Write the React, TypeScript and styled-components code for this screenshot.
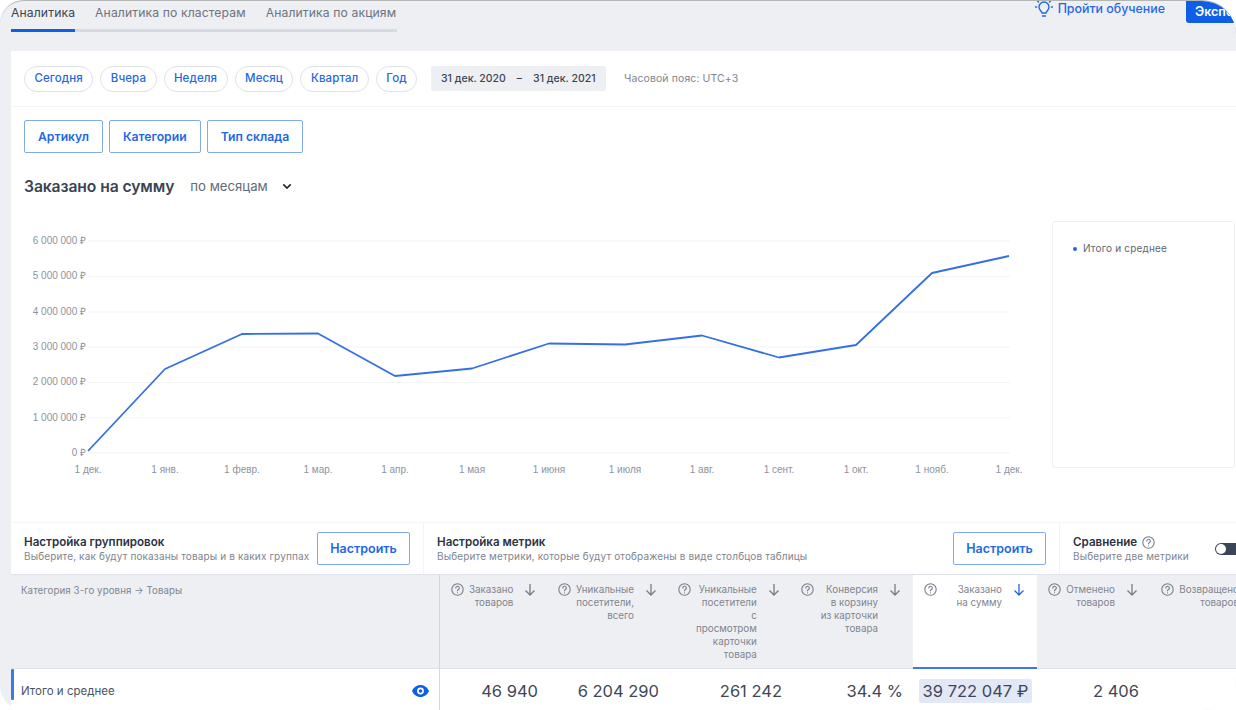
import React from "react";
import styled, { createGlobalStyle } from "styled-components";

const Global = createGlobalStyle`
  html, body { margin: 0; padding: 0; background: #fff; }
  body { font-family: Inter, "Noto Sans", "Liberation Sans", sans-serif; }
  * { box-sizing: border-box; }
`;

const Window = styled.div`
  width: 1236px;
  height: 710px;
  background: #eeeff3;
  border-top: 1px solid #b4b5b5;
  border-radius: 24px 34px 34px 24px;
  overflow: hidden;
  padding-left: 11px;
`;
const TopBar = styled.header`
  display: flex;
  justify-content: space-between;
  align-items: flex-start;
  height: 50px;
`;
const Tabs = styled.nav`
  display: flex;
  width: 386px;
  height: 31px;
  border-bottom: 3px solid #d6dbe3;
`;
const Tab = styled.div<{ $active?: boolean }>`
  height: 31px;
  padding-top: 3px;
  margin-right: 20px;
  font-size: 12.2px;
  line-height: 17px;
  color: ${(p) => (p.$active ? "#3b4455" : "#6d7480")};
  border-bottom: 3px solid ${(p) => (p.$active ? "#0f5fe0" : "transparent")};
  letter-spacing: 0.1px;
  white-space: nowrap;
  &:last-child { margin-right: 0; }
`;
const TopActions = styled.div`
  display: flex;
  align-items: flex-start;
`;
const Learn = styled.div`
  display: flex;
  align-items: center;
  gap: 5px;
  height: 15px;
  margin-right: 21px;
  color: #2467e4;
  font-size: 12.4px;
  font-weight: 500;
  white-space: nowrap;
`;
const ExportButton = styled.div`
  width: 50px;
  height: 22px;
  padding: 3px 0 0 9px;
  background: #0f5fe6;
  color: #fff;
  font-size: 12.5px;
  font-weight: 600;
  border-bottom-left-radius: 3px;
  overflow: hidden;
`;
const Card = styled.main`
  background: #fff;
  height: 660px;
  overflow: hidden;
`;
const DateRow = styled.section`
  display: flex;
  align-items: center;
  height: 56px;
  padding: 0 13px;
  border-bottom: 1px solid #f3f4f6;
`;
const Pills = styled.div`
  display: flex;
  gap: 7px;
  width: 394px;
  margin-right: 13px;
`;
const Pill = styled.button`
  height: 26px;
  padding: 0 9.45px 2px;
  border: 1px solid #dfe2e8;
  border-radius: 13px;
  background: #fff;
  color: #2467e4;
  font: 500 11.5px Inter, sans-serif;
  letter-spacing: 0.1px;
`;
const DateBox = styled.div`
  display: flex;
  align-items: center;
  gap: 11px;
  width: 175px;
  height: 25px;
  padding: 0 10px;
  background: #eeeff3;
  border-radius: 2px;
  color: #3b4455;
  font-size: 10.5px;
  font-weight: 500;
  white-space: nowrap;
`;
const TimeZone = styled.span`
  margin-left: 18px;
  color: #80858f;
  font-size: 10.5px;
  letter-spacing: 0.1px;
`;
const FilterRow = styled.section`
  display: flex;
  gap: 6px;
  padding: 13px 13px 0;
`;
const FilterButton = styled.button`
  height: 33px;
  padding: 0 13px;
  background: #fff;
  border: 1px solid #80a9ef;
  border-radius: 2px;
  color: #2467e4;
  font: 600 12.2px Inter, sans-serif;
`;
const ChartHead = styled.section`
  display: flex;
  align-items: center;
  height: 22px;
  margin-top: 22px;
  padding-left: 13px;
`;
const ChartTitle = styled.h2`
  margin: 0 16px 0 0;
  color: #3b4455;
  font-size: 15.7px;
  font-weight: 600;
  letter-spacing: -0.1px;
`;
const Period = styled.div`
  display: flex;
  align-items: center;
  gap: 14px;
  color: #636a76;
  font-size: 13.2px;
`;
const ChartArea = styled.section`
  display: flex;
  height: 301px;
  margin-top: 24px;
`;
const ChartSvg = styled.svg`
  display: block;
  flex: none;
  width: 1041px;
  height: 301px;
  text {
    font-family: "Liberation Sans", Arial, sans-serif;
    font-size: 10px;
    fill: #8d939e;
  }
`;
const Legend = styled.aside`
  display: flex;
  align-items: flex-start;
  gap: 6px;
  width: 183px;
  height: 247px;
  padding: 20px 20px 0;
  border: 1px solid #eff0f3;
  border-radius: 3px;
  color: #5f6672;
  font-size: 10px;
  line-height: 13px;
  letter-spacing: 0.18px;
`;
const Dot = styled.span`
  width: 4px;
  height: 4px;
  margin-top: 5px;
  border-radius: 50%;
  background: #2467e4;
`;
const Settings = styled.section`
  display: grid;
  grid-template-columns: 413px 636px 1fr;
  height: 53px;
  border-top: 1px solid #f6f6f8;
  border-bottom: 1px solid #dfe2e8;
`;
const SettingsCell = styled.div`
  display: flex;
  justify-content: space-between;
  align-items: center;
  padding: 0 13px;
  border-right: 1px solid #f3f4f6;
  &:last-child { border-right: 0; padding-right: 0; }
`;
const SettingsTitle = styled.div`
  display: flex;
  align-items: center;
  gap: 5px;
  color: #2b3342;
  font-size: 11.6px;
  font-weight: 600;
  line-height: 15px;
`;
const SettingsDesc = styled.div`
  color: #80858f;
  font-size: 10px;
  line-height: 13px;
  letter-spacing: 0.14px;
  white-space: nowrap;
`;
const Configure = styled.button`
  flex: none;
  width: 93px;
  height: 33px;
  background: #fff;
  border: 1px solid #80a9ef;
  border-radius: 2px;
  color: #2467e4;
  font: 600 12.5px Inter, sans-serif;
`;
const Toggle = styled.div`
  position: relative;
  flex: none;
  width: 30px;
  height: 12px;
  margin-right: -9px;
  border-radius: 6px;
  background: #3b4558;
  &::before {
    content: "";
    position: absolute;
    left: 1px;
    top: 1px;
    width: 10px;
    height: 10px;
    border-radius: 50%;
    background: #fff;
  }
`;
const TableGrid = styled.section`
  display: grid;
  grid-template-columns: 429px 107px 120px 123px 123px 124px 113px 124px;
  grid-template-rows: 94px 42px;
`;
const CornerHead = styled.div`
  padding: 9px 10px;
  background: #eeeff3;
  border-right: 1px solid #d3d6dd;
  border-bottom: 1px solid #dfe2e8;
  color: #80858f;
  font-size: 9.7px;
  line-height: 13px;
  letter-spacing: 0.1px;
`;
const MetricHead = styled.div<{ $active?: boolean }>`
  display: flex;
  align-items: flex-start;
  justify-content: space-between;
  padding: 8px 12px 0 11px;
  background: ${(p) => (p.$active ? "#fff" : "#eeeff3")};
  border-bottom: ${(p) => (p.$active ? "2px solid #3d79e4" : "1px solid #dfe2e8")};
  color: #80858f;
  font-size: 9.8px;
  line-height: 13px;
`;
const MetricLabel = styled.div`
  flex: 1;
  margin: 0 11px 0 5px;
  text-align: right;
  white-space: nowrap;
`;
const RowLabel = styled.div`
  position: relative;
  display: flex;
  align-items: center;
  justify-content: space-between;
  padding: 2px 10px 0 10px;
  background: #fff;
  border-right: 1px solid #d3d6dd;
  color: #4b5361;
  font-size: 11.5px;
  &::before {
    content: "";
    position: absolute;
    left: 0;
    top: 0;
    width: 3px;
    height: 31px;
    background: #3d79e4;
    border-radius: 1px;
  }
`;
const Value = styled.div<{ $pad?: number }>`
  display: flex;
  align-items: center;
  justify-content: flex-end;
  padding: 2px ${(p) => p.$pad ?? 9}px 0 0;
  color: #3e4757;
  font-size: 16.5px;
  white-space: nowrap;
`;
const Highlight = styled.span`
  display: block;
  width: 113px;
  margin-left: 6px;
  padding: 2px 0;
  line-height: 20px;
  background: #e2e8f5;
  border-radius: 2px;
  text-align: center;
`;
const ActiveValue = styled.div`
  display: flex;
  align-items: center;
  padding-top: 2px;
  color: #3e4757;
  font-size: 16.5px;
  white-space: nowrap;
`;

const Help = ({ size = 13 }: { size?: number }) => (
  <svg width={size} height={size} viewBox="0 0 24 24" fill="none" stroke="#777d88" strokeWidth="2" strokeLinecap="round" style={{ flex: "none" }}>
    <circle cx="12" cy="12" r="10.5" />
    <path d="M8.8 9.2a3.3 3.3 0 1 1 4.9 2.9c-1.1.6-1.7 1.2-1.7 2.4" />
    <path d="M12 18v.2" />
  </svg>
);
const Arrow = ({ active }: { active?: boolean }) => (
  <svg width="12" height="13" viewBox="0 0 12 13" fill="none" stroke={active ? "#2467e4" : "#777d88"} strokeWidth="1.3" style={{ flex: "none" }}>
    <path d="M6 1v11M1.500 7.500 6 12l4.500-4.500" />
  </svg>
);
const Bulb = () => (
  <svg width="18" height="18" viewBox="0 0 18 18" fill="none" stroke="#2467e4" strokeWidth="1.4" strokeLinecap="round" style={{ flex: "none", marginTop: 1 }}>
    <path d="M7 13c-.2-1.800-3-2.700-3-6a5 5 0 0 1 10 0c0 3.300-2.800 4.200-3 6z" />
    <path d="M7.500 16h3M.6 7h1M16.400 7h1M2.700 1.200l.8.8M15.300 1.200l-.8.8" />
  </svg>
);
const Chevron = () => (
  <svg width="10" height="7" viewBox="0 0 10 7" fill="none" stroke="#222a38" strokeWidth="1.7">
    <path d="M1.300 1.300 5 5l3.700-3.700" />
  </svg>
);
const Eye = () => (
  <svg width="17" height="12" viewBox="0 0 17 12">
    <path fill="#0f5fe6" fillRule="evenodd" d="M8.500 0C12.300 0 15.500 2.500 17 6c-1.500 3.500-4.700 6-8.500 6S1.500 9.500 0 6C1.500 2.500 4.700 0 8.500 0zm0 2.600a3.400 3.400 0 1 0 0 6.800 3.400 3.400 0 0 0 0-6.800zm0 1.600a1.800 1.800 0 1 1 0 3.600 1.800 1.800 0 0 1 0-3.600z" />
  </svg>
);

const ticks = [
  [241, "6 000 000 ₽"], [276.5, "5 000 000 ₽"], [312, "4 000 000 ₽"], [347, "3 000 000 ₽"],
  [382.5, "2 000 000 ₽"], [418, "1 000 000 ₽"], [453, "0 ₽"],
] as const;
const months = ["1 дек.", "1 янв.", "1 февр.", "1 мар.", "1 апр.", "1 мая", "1 июня", "1 июля", "1 авг.", "1 сент.", "1 окт.", "1 нояб.", "1 дек."];
const monthX = [88, 165, 242, 318, 395, 472, 549, 625, 702, 779, 856, 932, 1009];
const line = [451, 369, 334, 333.5, 376, 368.5, 343.5, 344.5, 335.5, 357.5, 345, 273, 256];

const metrics: { lines: string[]; active?: boolean }[] = [
  { lines: ["Заказано", "товаров"] },
  { lines: ["Уникальные", "посетители,", "всего"] },
  { lines: ["Уникальные", "посетители", "с", "просмотром", "карточки", "товара"] },
  { lines: ["Конверсия", "в корзину", "из карточки", "товара"] },
  { lines: ["Заказано", "на сумму"], active: true },
  { lines: ["Отменено", "товаров"] },
  { lines: ["Возвращено", "товаров"] },
];

export default function App() {
  return (
    <Window>
      <Global />
      <TopBar>
        <Tabs>
          <Tab $active>Аналитика</Tab>
          <Tab>Аналитика по кластерам</Tab>
          <Tab>Аналитика по акциям</Tab>
        </Tabs>
        <TopActions>
          <Learn><Bulb />Пройти обучение</Learn>
          <ExportButton>Экспорт</ExportButton>
        </TopActions>
      </TopBar>
      <Card>
        <DateRow>
          <Pills>
            {["Сегодня", "Вчера", "Неделя", "Месяц", "Квартал", "Год"].map((p) => <Pill key={p}>{p}</Pill>)}
          </Pills>
          <DateBox><span>31 дек. 2020</span><span>–</span><span>31 дек. 2021</span></DateBox>
          <TimeZone>Часовой пояс: UTC+3</TimeZone>
        </DateRow>
        <FilterRow>
          <FilterButton>Артикул</FilterButton>
          <FilterButton>Категории</FilterButton>
          <FilterButton>Тип склада</FilterButton>
        </FilterRow>
        <ChartHead>
          <ChartTitle>Заказано на сумму</ChartTitle>
          <Period>по месяцам <Chevron /></Period>
        </ChartHead>
        <ChartArea>
          <ChartSvg viewBox="11 221 1041 301">
            {ticks.map(([y, label]) => (
              <g key={label}>
                <line x1="88" x2="1010" y1={y} y2={y} stroke="#f2f3f5" strokeWidth="1" />
                <text x="86" y={y + 2.5} textAnchor="end">{label}</text>
              </g>
            ))}
            {months.map((m, i) => (
              <text key={i} x={monthX[i]} y="473" textAnchor="middle">{m}</text>
            ))}
            <polyline fill="none" stroke="#3370e6" strokeWidth="1.8" strokeLinejoin="round" points={line.map((y, i) => `${monthX[i]},${y}`).join(" ")} />
          </ChartSvg>
          <Legend><Dot />Итого и среднее</Legend>
        </ChartArea>
        <Settings>
          <SettingsCell>
            <div>
              <SettingsTitle>Настройка группировок</SettingsTitle>
              <SettingsDesc>Выберите, как будут показаны товары и в каких группах</SettingsDesc>
            </div>
            <Configure>Настроить</Configure>
          </SettingsCell>
          <SettingsCell>
            <div>
              <SettingsTitle>Настройка метрик</SettingsTitle>
              <SettingsDesc>Выберите метрики, которые будут отображены в виде столбцов таблицы</SettingsDesc>
            </div>
            <Configure>Настроить</Configure>
          </SettingsCell>
          <SettingsCell>
            <div>
              <SettingsTitle>Сравнение <Help size={13} /></SettingsTitle>
              <SettingsDesc>Выберите две метрики</SettingsDesc>
            </div>
            <Toggle />
          </SettingsCell>
        </Settings>
        <TableGrid>
          <CornerHead>Категория 3-го уровня → Товары</CornerHead>
          {metrics.map((m, i) => (
            <MetricHead key={i} $active={m.active}>
              <Help />
              <MetricLabel>
                {m.lines.map((l) => <div key={l}>{l}</div>)}
              </MetricLabel>
              <Arrow active={m.active} />
            </MetricHead>
          ))}
          <RowLabel>Итого и среднее <Eye /></RowLabel>
          <Value>46 940</Value>
          <Value $pad={8}>6 204 290</Value>
          <Value $pad={8}>261 242</Value>
          <Value $pad={10}>34.4 %</Value>
          <ActiveValue><Highlight>39 722 047 ₽</Highlight></ActiveValue>
          <Value $pad={11}>2 406</Value>
          <Value />
        </TableGrid>
      </Card>
    </Window>
  );
}
